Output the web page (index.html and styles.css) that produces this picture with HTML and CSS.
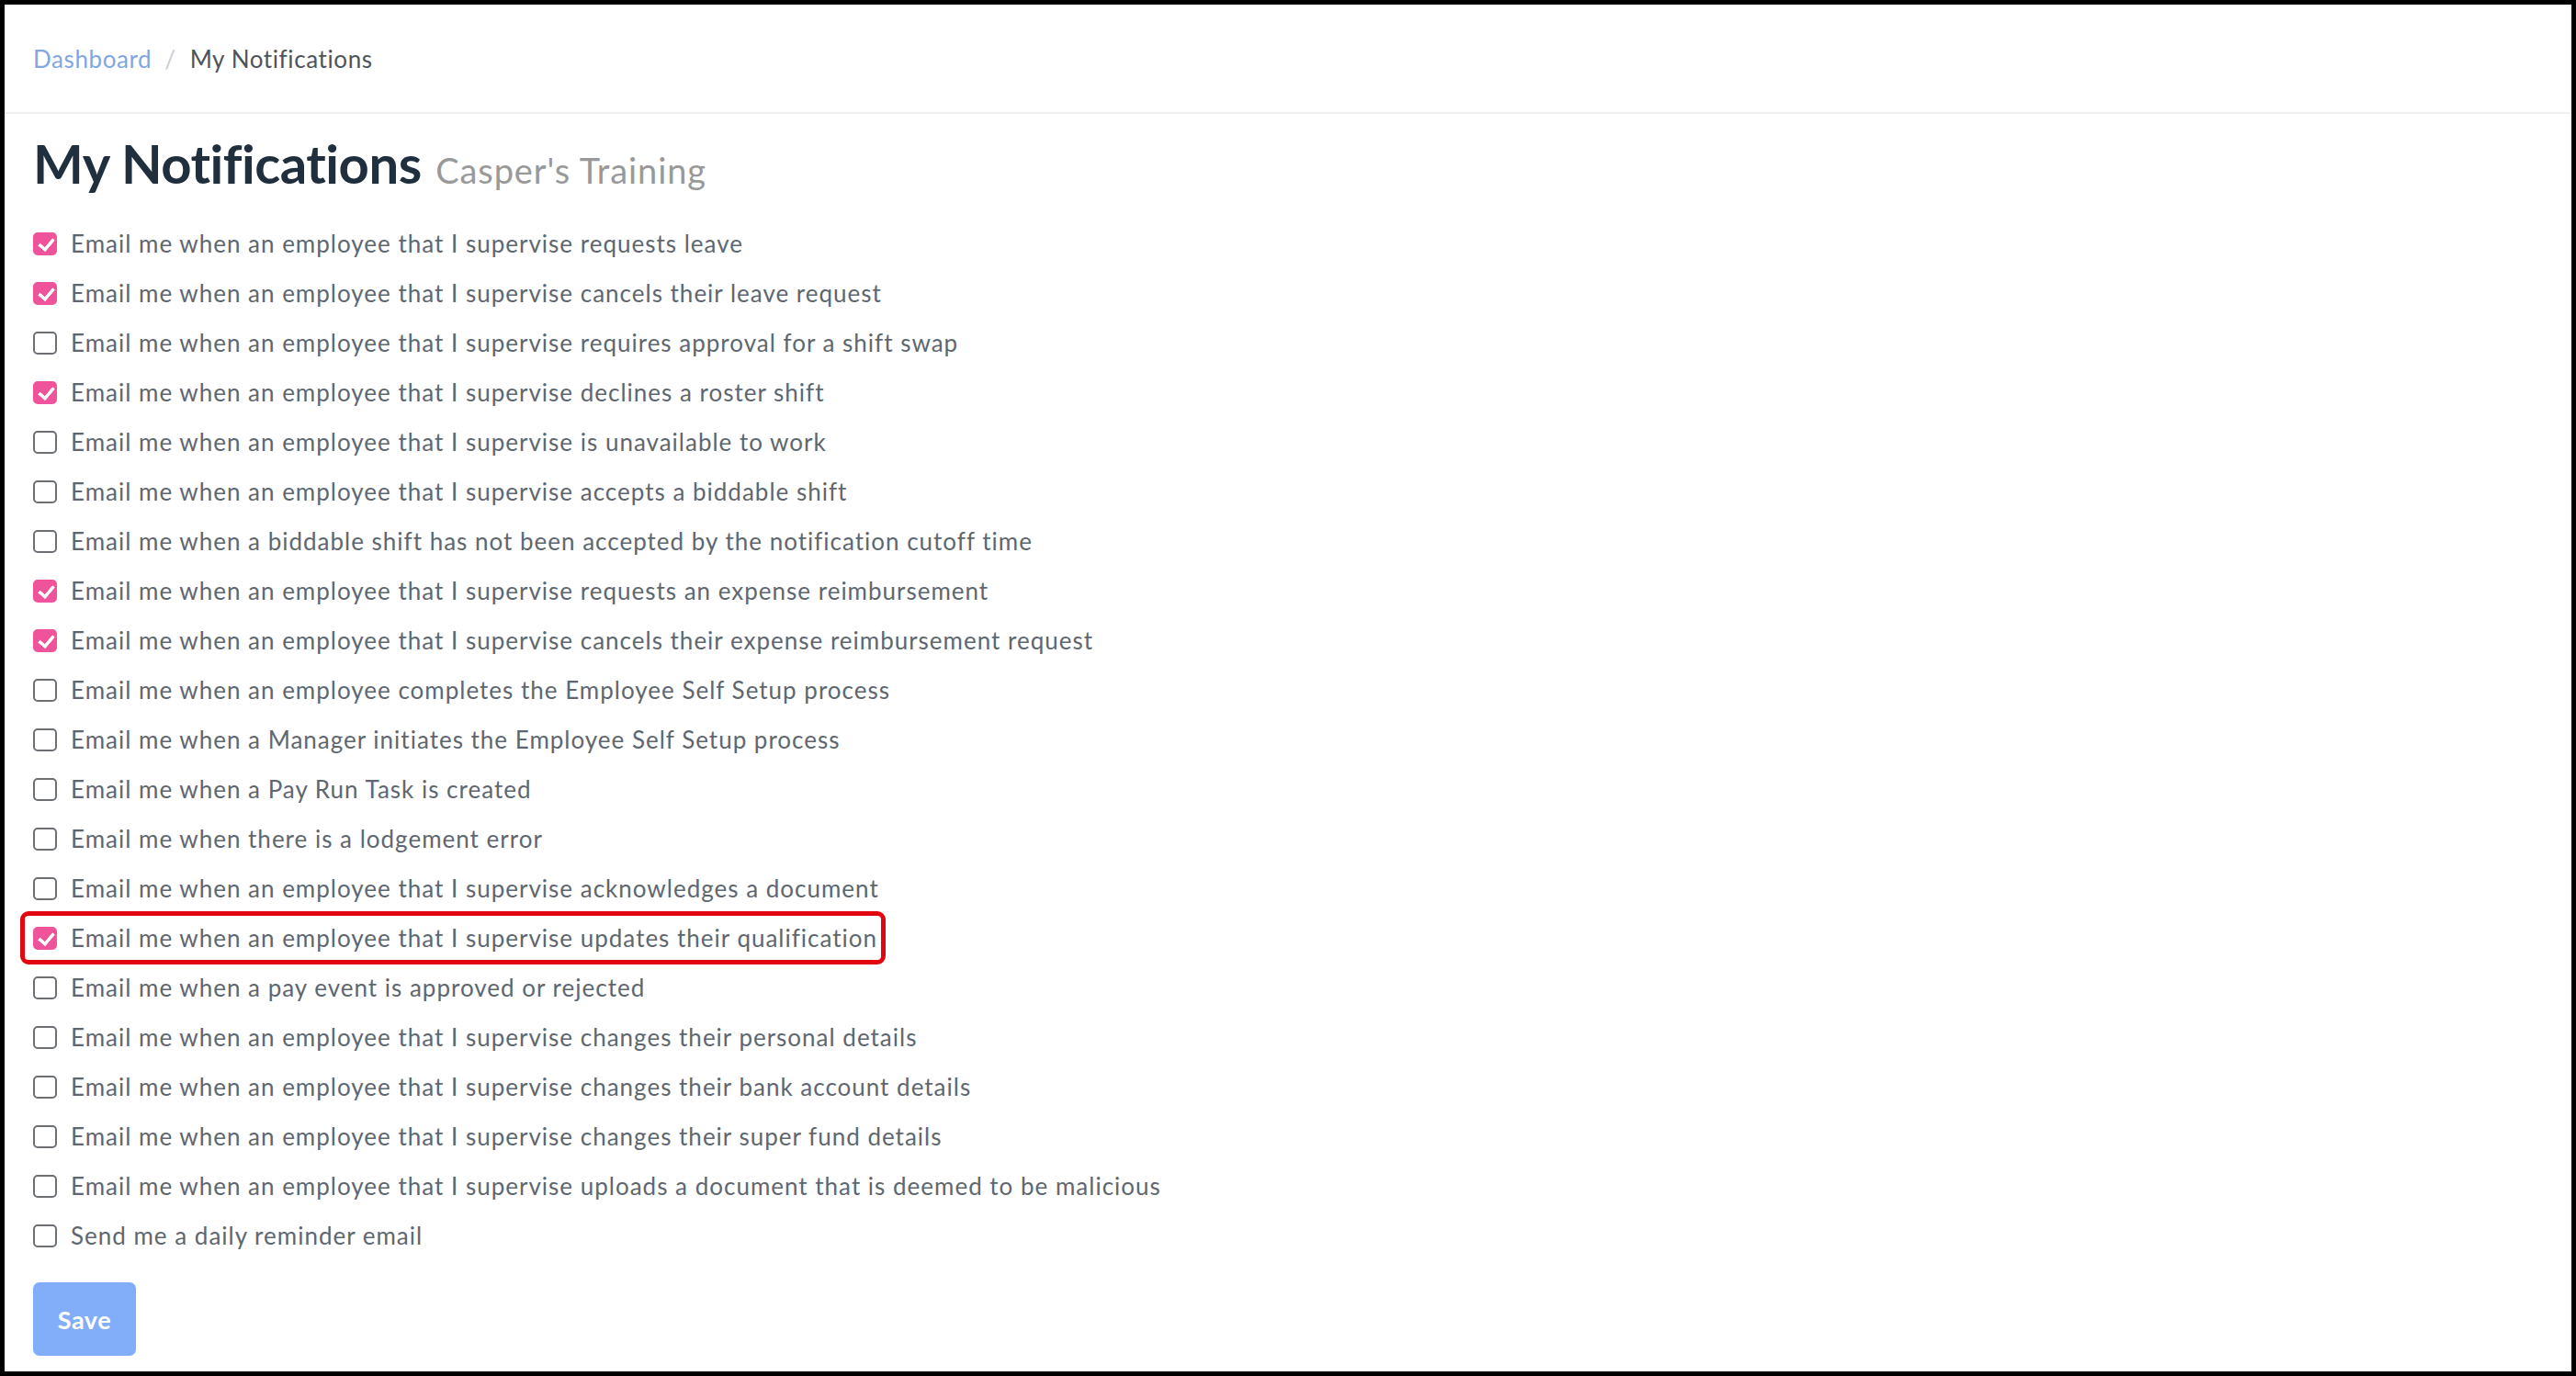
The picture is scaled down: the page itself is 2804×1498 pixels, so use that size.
FILE: index.html
```html
<!DOCTYPE html>
<html lang="en">
<head>
    <meta charset="UTF-8">
    <title>My Notifications</title>
    <link rel="stylesheet" href="styles.css">
</head>
<body>

<div class="frame">
    <div class="crumbs">
        <a href="#" class="crumb-link">Dashboard</a>
        <span class="crumb-sep">/</span>
        <span class="crumb-current">My Notifications</span>
    </div>

    <div class="content">
        <h1 class="page-title">My Notifications <small>Casper's Training</small></h1>

        <form class="notify-list">
            <label class="option"><input type="checkbox" checked> Email me when an employee that I supervise requests leave</label>
            <label class="option"><input type="checkbox" checked> Email me when an employee that I supervise cancels their leave request</label>
            <label class="option"><input type="checkbox"> Email me when an employee that I supervise requires approval for a shift swap</label>
            <label class="option"><input type="checkbox" checked> Email me when an employee that I supervise declines a roster shift</label>
            <label class="option"><input type="checkbox"> Email me when an employee that I supervise is unavailable to work</label>
            <label class="option"><input type="checkbox"> Email me when an employee that I supervise accepts a biddable shift</label>
            <label class="option"><input type="checkbox"> Email me when a biddable shift has not been accepted by the notification cutoff time</label>
            <label class="option"><input type="checkbox" checked> Email me when an employee that I supervise requests an expense reimbursement</label>
            <label class="option"><input type="checkbox" checked> Email me when an employee that I supervise cancels their expense reimbursement request</label>
            <label class="option"><input type="checkbox"> Email me when an employee completes the Employee Self Setup process</label>
            <label class="option"><input type="checkbox"> Email me when a Manager initiates the Employee Self Setup process</label>
            <label class="option"><input type="checkbox"> Email me when a Pay Run Task is created</label>
            <label class="option"><input type="checkbox"> Email me when there is a lodgement error</label>
            <label class="option"><input type="checkbox"> Email me when an employee that I supervise acknowledges a document</label>
            <label class="option highlight"><input type="checkbox" checked> Email me when an employee that I supervise updates their qualification</label>
            <label class="option"><input type="checkbox"> Email me when a pay event is approved or rejected</label>
            <label class="option"><input type="checkbox"> Email me when an employee that I supervise changes their personal details</label>
            <label class="option"><input type="checkbox"> Email me when an employee that I supervise changes their bank account details</label>
            <label class="option"><input type="checkbox"> Email me when an employee that I supervise changes their super fund details</label>
            <label class="option"><input type="checkbox"> Email me when an employee that I supervise uploads a document that is deemed to be malicious</label>
            <label class="option"><input type="checkbox"> Send me a daily reminder email</label>

            <button type="button" class="btn-save">Save</button>
        </form>
    </div>
</div>

</body>
</html>
```

FILE: styles.css
```css
* {
    box-sizing: border-box;
}
body {
    margin: 0;
    font-family: Lato, "Open Sans", sans-serif;
    color: #5e6770;
    background: #000;
}
.frame {
    height: 1498px;
    border: 5px solid #000;
    background: #fff;
}
.crumbs {
    height: 119px;
    display: flex;
    align-items: center;
    padding: 0 0 0 31px;
    font-size: 26px;
    letter-spacing: 0.6px;
    border-bottom: 2px solid #eef0f2;
}
.crumb-link {
    color: #7fa7e2;
    text-decoration: none;
}
.crumb-sep {
    color: #c9ccd0;
    margin: 0 15px 0 14px;
}
.crumb-current {
    color: #4d545b;
}
.content {
    padding: 0 31px;
}
.page-title {
    margin: 0;
    height: 114px;
    padding-top: 19px;
    font-size: 58px;
    font-weight: 700;
    color: #1f2f3d;
    letter-spacing: -0.5px;
}
.page-title small {
    font-size: 38px;
    font-weight: 400;
    color: #999;
    margin-left: 2px;
    letter-spacing: 0.9px;
}
.notify-list {
    display: flex;
    flex-direction: column;
    align-items: flex-start;
}
.option {
    position: relative;
    display: flex;
    align-items: center;
    gap: 15px;
    height: 54px;
    font-size: 26px;
    letter-spacing: 1px;
    cursor: pointer;
}
.option input {
    appearance: none;
    position: relative;
    width: 26px;
    height: 25px;
    margin: 0;
    flex-shrink: 0;
    border: 2px solid #6c7075;
    border-radius: 5px;
    background: #fff;
    cursor: pointer;
}
.option input:checked {
    background: #ef539a;
    border-color: #ef539a;
}
.option input:checked::after {
    content: "";
    position: absolute;
    left: 7px;
    top: 1px;
    width: 7px;
    height: 13px;
    border-right: 4px solid #fff;
    border-bottom: 4px solid #fff;
    border-radius: 1px;
    transform: rotate(40deg);
}
.highlight::before {
    content: "";
    position: absolute;
    top: -2px;
    bottom: -2px;
    left: -14px;
    right: -9px;
    border: 5px solid #e2070f;
    border-radius: 9px;
    pointer-events: none;
}
.btn-save {
    margin-top: 24px;
    width: 112px;
    height: 80px;
    border: none;
    border-radius: 7px;
    background: #82aef9;
    color: #fff;
    font-family: Lato, "Open Sans", sans-serif;
    font-size: 27px;
    font-weight: 700;
    letter-spacing: 0.5px;
}
```
